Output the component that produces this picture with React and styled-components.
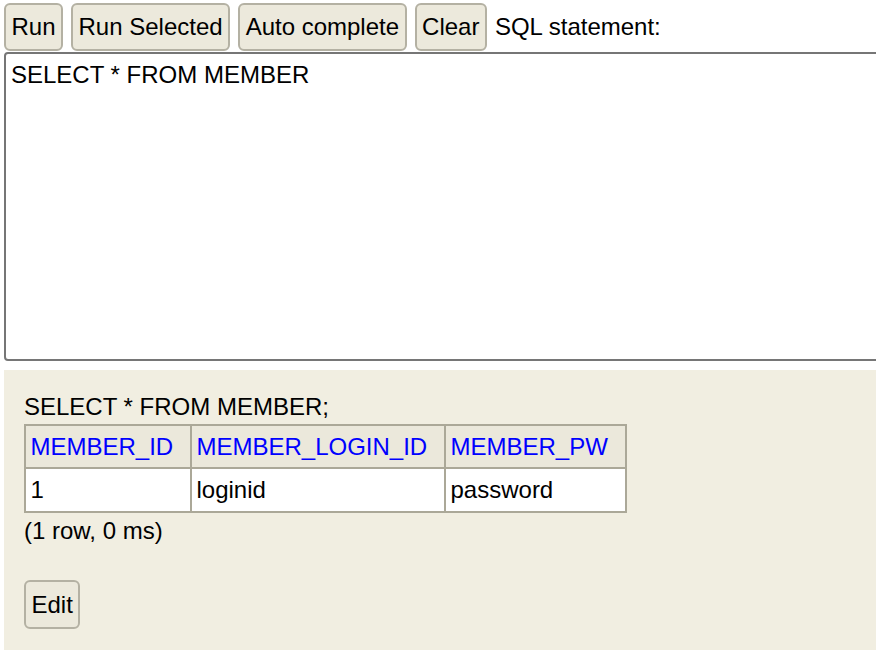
import React from "react";
import styled, { createGlobalStyle } from "styled-components";

const Global = createGlobalStyle`
  html, body {
    margin: 0;
    padding: 0;
    background: #ffffff;
    overflow: hidden;
  }
  body {
    font-family: "Liberation Sans", Arial, Helvetica, sans-serif;
    font-size: 24px;
    color: #000;
  }
`;

const Page = styled.div`
  width: 876px;
  height: 650px;
  overflow: hidden;
  padding: 3px 0 0 4px;
  box-sizing: border-box;
`;

const Toolbar = styled.div`
  display: flex;
  align-items: center;
  gap: 8px;
  white-space: nowrap;
`;

const Button = styled.button`
  height: ${(p) => (p.$tall ? "49px" : "48px")};
  padding: 0 5.5px;
  border: 2px solid #b4b1a3;
  border-radius: 6px;
  background: #ece9dc;
  font-family: "Liberation Sans", Arial, Helvetica, sans-serif;
  font-size: 24px;
  color: #000;
  cursor: pointer;
  flex: none;
`;

const Label = styled.span`
  font-size: 24px;
`;

const SqlArea = styled.textarea`
  display: block;
  margin-top: 1px;
  width: 900px;
  height: 309px;
  box-sizing: border-box;
  border: 2px solid #767676;
  border-radius: 4px;
  padding: 7px 5px 5px 5px;
  font-family: "Liberation Sans", Arial, Helvetica, sans-serif;
  font-size: 24px;
  color: #000;
  resize: none;
  outline: none;
  background: #fff;
`;

const Result = styled.div`
  margin-top: 9px;
  background: #f1eee1;
  padding: 23px 20px 40px 20px;
  min-height: 300px;
`;

const Statement = styled.div`
  line-height: 27.6px;
`;

const Table = styled.table`
  margin-top: 3px;
  border-collapse: collapse;
  border: 2px solid #aba898;
`;

const Th = styled.th`
  border: 2px solid #aba898;
  background: #ebe8db;
  color: #0000ff;
  font-weight: normal;
  text-align: left;
  padding: 7px 16.8px 7px 4.5px;
  line-height: 27.6px;
`;

const Td = styled.td`
  border: 2px solid #aba898;
  background: #ffffff;
  text-align: left;
  padding: 7px 16.8px 7px 4.5px;
  line-height: 27.6px;
`;

const Info = styled.div`
  margin-top: 4px;
  line-height: 27.6px;
`;

const EditRow = styled.div`
  margin-top: 36px;
`;

const columns = ["MEMBER_ID", "MEMBER_LOGIN_ID", "MEMBER_PW"];
const rows = [["1", "loginid", "password"]];

export default function App() {
  return (
    <Page>
      <Global />
      <Toolbar>
        <Button>Run</Button>
        <Button>Run Selected</Button>
        <Button>Auto complete</Button>
        <Button>Clear</Button>
        <Label>SQL statement:</Label>
      </Toolbar>
      <SqlArea defaultValue="SELECT * FROM MEMBER" spellCheck={false} />
      <Result>
        <Statement>SELECT * FROM MEMBER;</Statement>
        <Table>
          <thead>
            <tr>
              {columns.map((c) => (
                <Th key={c}>{c}</Th>
              ))}
            </tr>
          </thead>
          <tbody>
            {rows.map((r, i) => (
              <tr key={i}>
                {r.map((v, j) => (
                  <Td key={j}>{v}</Td>
                ))}
              </tr>
            ))}
          </tbody>
        </Table>
        <Info>(1 row, 0 ms)</Info>
        <EditRow>
          <Button $tall>Edit</Button>
        </EditRow>
      </Result>
    </Page>
  );
}
